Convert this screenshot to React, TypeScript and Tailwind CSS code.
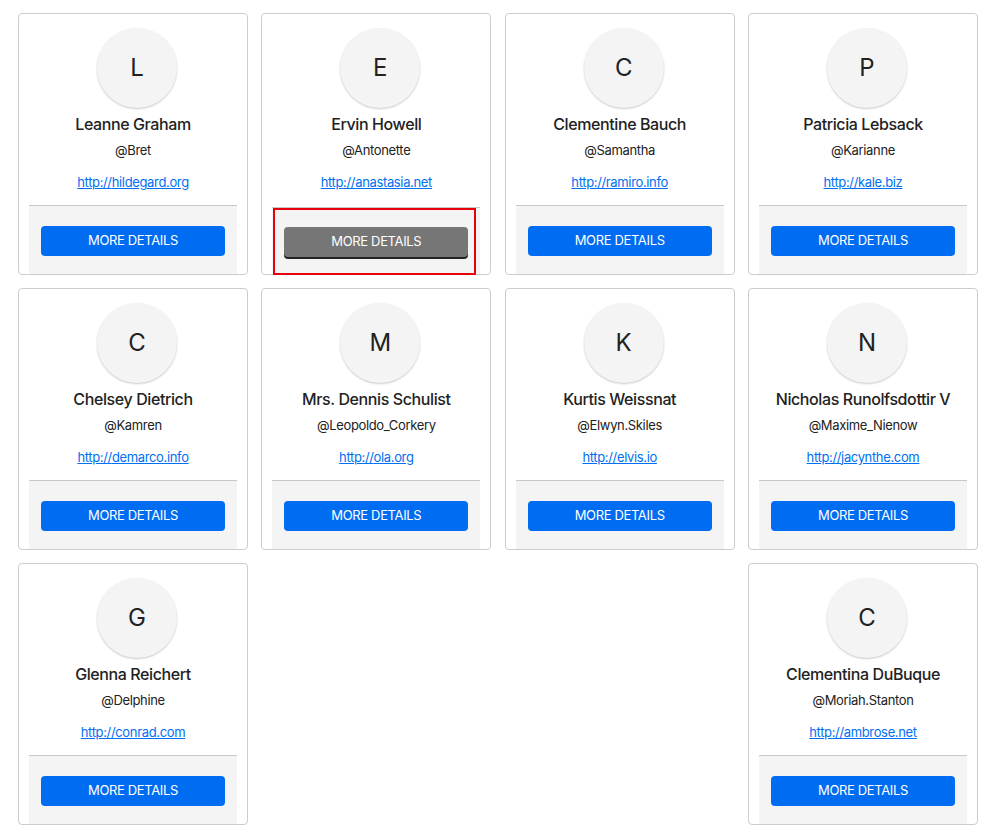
import React from "react";

type User = {
    name: string;
    username: string;
    website: string;
};

const users: User[] = [
    { name: "Leanne Graham", username: "Bret", website: "hildegard.org" },
    { name: "Ervin Howell", username: "Antonette", website: "anastasia.net" },
    { name: "Clementine Bauch", username: "Samantha", website: "ramiro.info" },
    { name: "Patricia Lebsack", username: "Karianne", website: "kale.biz" },
    { name: "Chelsey Dietrich", username: "Kamren", website: "demarco.info" },
    { name: "Mrs. Dennis Schulist", username: "Leopoldo_Corkery", website: "ola.org" },
    { name: "Kurtis Weissnat", username: "Elwyn.Skiles", website: "elvis.io" },
    { name: "Nicholas Runolfsdottir V", username: "Maxime_Nienow", website: "jacynthe.com" },
    { name: "Glenna Reichert", username: "Delphine", website: "conrad.com" },
    { name: "Clementina DuBuque", username: "Moriah.Stanton", website: "ambrose.net" },
];

const UserCard = ( { user, hovered }: { user: User; hovered?: boolean } ) =>
{
    return (
        <div className="w-[230px] border border-[#cccccc] rounded-[4px] px-[10px] pt-[14px] flex flex-col items-center">
            <div className="ml-[8px] w-[80px] h-[80px] rounded-full bg-[#f4f4f4] shadow-[0_1px_2px_rgba(0,0,0,0.22)] flex items-center justify-center text-[24px] text-[#222]">
                { user.name.charAt( 0 ) }
            </div>
            <div className="mt-[4px] text-[16px] leading-[24px] font-medium tracking-[-0.4px] text-[#222]">{ user.name }</div>
            <div className="mt-[4px] text-[13px] leading-[20px] tracking-[-0.35px] text-[#222]">@{ user.username }</div>
            <a href="#" className="mt-[12px] text-[13px] leading-[20px] tracking-[-0.35px] text-[#0070f3] underline">
                http://{ user.website }
            </a>
            <div className={ `relative w-full border-t border-[#c8c8c8] bg-[#f4f4f4] px-[12px] ${ hovered ? "mt-[15px] pt-[19px] pb-[17px]" : "mt-[13px] pt-[20px] pb-[18px]" }` }>
                { hovered ? (
                    <button className="w-[184px] h-[30px] rounded-[4px] bg-[#767676] text-white text-[13px] tracking-[-0.35px] shadow-[0_2px_0_#222]">
                        MORE DETAILS
                    </button>
                ) : (
                    <button className="w-[184px] h-[30px] rounded-[4px] bg-[#006cf2] text-white text-[13px] tracking-[-0.35px]">
                        MORE DETAILS
                    </button>
                ) }
                { hovered && (
                    <div className="absolute left-[1px] top-[0px] w-[203px] h-[67px] border-2 border-[#e8000b] pointer-events-none"></div>
                ) }
            </div>
        </div>
    );
};

const App = () =>
{
    return (
        <div className="min-h-screen bg-white font-['Inter','Liberation_Sans',sans-serif]">
            <div className="flex flex-wrap justify-between gap-y-[13px] pl-[18px] pr-[17px] pt-[13px] pb-[8px]">
                { users.map( ( u, i ) => (
                    <UserCard key={ u.username } user={ u } hovered={ i === 1 } />
                ) ) }
            </div>
        </div>
    );
};

export default App;
